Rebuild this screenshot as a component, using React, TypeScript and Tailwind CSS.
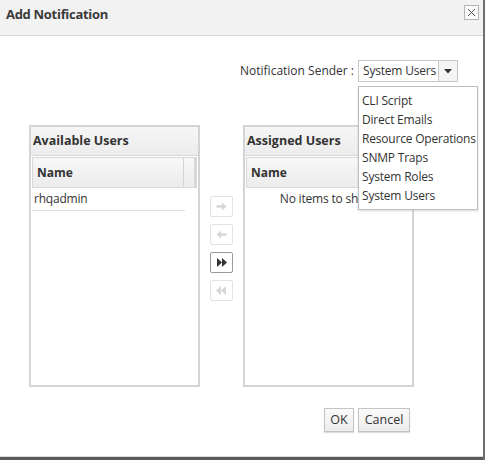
import React from "react";

const font = { fontFamily: '"Open Sans", "Noto Sans", sans-serif' };

function Arrow({ dir, enabled }: { dir: "r" | "l" | "rr" | "ll"; enabled?: boolean }) {
  const c = enabled ? "#333" : "#d6d6d6";
  return (
    <div
      className={`w-[23px] h-[21px] rounded-[2px] border flex items-center justify-center bg-white ${
        enabled ? "border-[#9a9a9a]" : "border-[#e2e2e2]"
      }`}
    >
      <svg width="13" height="11" viewBox="0 0 13 11">
        {dir === "r" && <path d="M1.5 4.3h5.5V1.5L11.5 5.5 7 9.5V6.7H1.5z" fill={c} />}
        {dir === "l" && <path d="M11.5 4.3H6V1.5L1.5 5.5 6 9.5V6.7h5.5z" fill={c} />}
        {dir === "rr" && (
          <g fill={c}>
            <path d="M2 1l5 4.5-5 4.5z" />
            <path d="M7 1l5 4.5-5 4.5z" />
          </g>
        )}
        {dir === "ll" && (
          <g fill={c}>
            <path d="M11 1l-5 4.5 5 4.5z" />
            <path d="M6 1l-5 4.5 5 4.5z" />
          </g>
        )}
      </svg>
    </div>
  );
}

function Panel({ title, children }: { title: string; children: React.ReactNode }) {
  return (
    <div className="w-[171px] h-[262px] border-2 border-[#d4d4d4] flex flex-col bg-white">
      <div className="h-[29px] shrink-0 border-b border-[#d8d8d8] bg-gradient-to-b from-[#f6f6f6] to-[#ececec] flex items-center pl-[2px] text-[12.5px] font-bold text-[#333]">
        {title}
      </div>
      <div className="h-[31px] shrink-0 mt-px mx-px border border-[#d8d8d8] bg-gradient-to-b from-[#f8f8f8] to-[#ececec] flex">
        <div className="w-[151px] border-r border-[#d4d4d4] flex items-center pl-[4px] text-[12px] font-bold text-[#333]">
          Name
        </div>
        <div className="flex-1 border-r-2 border-[#d8d8d8]" />
      </div>
      {children}
    </div>
  );
}

export default function App() {
  return (
    <div
      style={font}
      className="w-[485px] h-[460px] bg-white relative flex flex-col border-r-[2px] border-r-[#707070] text-[#333] overflow-hidden"
    >
      <div className="h-[36px] shrink-0 bg-[#f2f2f2] border-b border-[#d6d6d6] flex items-start justify-between">
        <div className="pl-[6px] pt-[5px] text-[13px] tracking-[-0.3px] font-bold text-[#3a3a3a]">Add Notification</div>
        <div className="mt-[5px] mr-[4px] w-[15px] h-[15px] border border-[#b4b4b4] bg-[#fafafa] flex items-center justify-center">
          <svg width="9" height="9" viewBox="0 0 9 9">
            <path d="M1 1l7 7M8 1L1 8" stroke="#555" strokeWidth="1" />
          </svg>
        </div>
      </div>

      <div className="flex-1 flex flex-col">
        <div className="flex justify-end items-center pr-[25px] mt-[24px] h-[22px]">
          <span className="text-[12px] mr-[4px] text-[#333]">Notification Sender :</span>
          <div className="w-[100px] h-[22px] border border-[#c8c8c8] flex bg-white">
            <div className="flex-1 pl-[4px] text-[12px] tracking-[-0.2px] flex items-center whitespace-nowrap overflow-hidden">System Users</div>
            <div className="w-[19px] border-l border-[#c8c8c8] bg-[#f4f4f4] flex items-center justify-center">
              <svg width="8" height="5" viewBox="0 0 8 5">
                <path d="M0 0h8L4 4.5z" fill="#333" />
              </svg>
            </div>
          </div>
        </div>

        <div className="flex mt-[43px] pl-[29px]">
          <Panel title="Available Users">
            <div className="w-[153px] ml-px h-[23px] border-b border-[#dedede] flex items-center pl-[2px] text-[12px] tracking-[-0.2px]">
              rhqadmin
            </div>
          </Panel>
          <div className="w-[43px] flex flex-col items-center pt-[71px] gap-[7px] pr-[1px]">
            <Arrow dir="r" />
            <Arrow dir="l" />
            <Arrow dir="rr" enabled />
            <Arrow dir="ll" />
          </div>
          <Panel title="Assigned Users">
            <div className="h-[22px] flex items-center justify-center text-[12px] tracking-[-0.2px]">No items to show.</div>
          </Panel>
        </div>

        <div className="flex justify-end gap-[4px] pr-[73px] mt-[21px]">
          <div className="w-[30px] h-[24px] border border-[#c4c4c4] bg-gradient-to-b from-[#fafafa] to-[#ececec] shadow-[0_1px_1px_rgba(0,0,0,0.12)] flex items-center justify-center text-[12.5px]">
            OK
          </div>
          <div className="w-[52px] h-[24px] border border-[#c4c4c4] bg-gradient-to-b from-[#fafafa] to-[#ececec] shadow-[0_1px_1px_rgba(0,0,0,0.12)] flex items-center justify-center text-[12.5px]">
            Cancel
          </div>
        </div>
      </div>

      <div className="h-px bg-[#dcdcdc] shrink-0" />
      <div className="h-[3px] bg-[#5a5a5a] shrink-0" />

      <div className="absolute left-[358px] top-[86px] w-[120px] h-[124px] border border-[#bdbdbd] bg-white shadow-[0_1px_2px_rgba(0,0,0,0.15)] overflow-hidden pt-[4px] text-[12px] tracking-[-0.2px]">
        {["CLI Script", "Direct Emails", "Resource Operations", "SNMP Traps", "System Roles", "System Users"].map((t) => (
          <div key={t} className="h-[19px] pl-[3px] flex items-center whitespace-nowrap">
            {t}
          </div>
        ))}
      </div>
    </div>
  );
}
